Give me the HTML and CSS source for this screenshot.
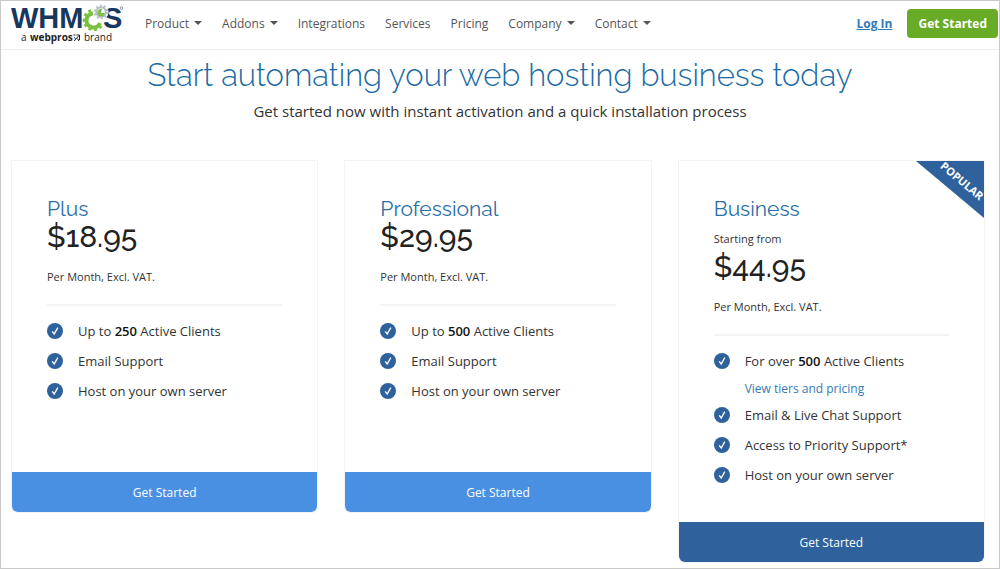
FILE: index.html
```
<!DOCTYPE html>
<html lang="en">
<head>
    <meta charset="UTF-8">
    <meta name="viewport" content="width=device-width, initial-scale=1.0">
    <title>WHMCS Pricing</title>
    <link rel="stylesheet" href="styles.css">
</head>
<body>
    <svg class="sprite" aria-hidden="true">
        <symbol id="check" viewBox="0 0 16 16">
            <circle cx="8" cy="8" r="8" fill="#2f629c"/>
            <path d="M5.200 8.400l2 2.600 3.600-6.400" fill="none" stroke="#fff" stroke-width="1.300"/>
        </symbol>
    </svg>

    <header class="navbar">
        <a class="logo" href="#" aria-label="WHMCS, a webpros brand">
            <svg width="116" height="42" viewBox="0 0 116 42">
                <g class="logo-name">
                    <text x="0" y="26">WHM</text>
                    <text x="92" y="26">S</text>
                </g>
                <!-- big gear, open on the right -->
                <path d="M89 21A7 7 0 1 1 82 11.500" fill="none" stroke="#7ac043" stroke-width="4"/>
                <path d="M90.500 24A9.800 9.800 0 1 1 82 8.200" fill="none" stroke="#7ac043" stroke-width="2.600" stroke-dasharray="3 2.600"/>
                <!-- small gear -->
                <circle cx="90" cy="10" r="7.600" fill="#fff"/>
                <circle cx="90" cy="10" r="4.800" fill="none" stroke="#b4bcc4" stroke-width="2"/>
                <circle cx="90" cy="10" r="6.400" fill="none" stroke="#b4bcc4" stroke-width="1.800" stroke-dasharray="2 2.020"/>
                <path d="M90 11l1-4A3.800 3.800 0 1 0 93.800 11z" fill="#7ac043"/>
                <circle cx="110.500" cy="6" r="1.300" fill="none" stroke="#8496a8" stroke-width="1"/>
                <g class="logo-brand">
                    <text x="10" y="39">a</text>
                    <text x="19" y="39" class="strong">webpros</text>
                    <text x="73" y="39">brand</text>
                </g>
                <path d="M62.500 33h2M65.500 33h3v5M68 33.500L63 39M63 35.500l1.500 1M66.500 36.500l1.500 2.500" fill="none" stroke="#222" stroke-width="1"/>
            </svg>
        </a>
        <nav class="menu">
            <a href="#">Product <span class="caret"></span></a>
            <a href="#">Addons <span class="caret"></span></a>
            <a href="#">Integrations</a>
            <a href="#">Services</a>
            <a href="#">Pricing</a>
            <a href="#">Company <span class="caret"></span></a>
            <a href="#">Contact <span class="caret"></span></a>
        </nav>
        <div class="actions">
            <a class="login" href="#">Log In</a>
            <button class="signup">Get Started</button>
        </div>
    </header>

    <main>
        <section class="intro">
            <h1>Start automating your web hosting business today</h1>
            <p>Get started now with instant activation and a quick installation process</p>
        </section>

        <section class="plans">
            <article class="plan">
                <div class="plan-body">
                    <h2>Plus</h2>
                    <div class="price">$18.95</div>
                    <p class="note">Per Month, Excl. VAT.</p>
                    <ul class="features">
                        <li><svg class="check"><use href="#check"/></svg><span>Up to <b>250</b> Active Clients</span></li>
                        <li><svg class="check"><use href="#check"/></svg><span>Email Support</span></li>
                        <li><svg class="check"><use href="#check"/></svg><span>Host on your own server</span></li>
                    </ul>
                </div>
                <button class="order">Get Started</button>
            </article>

            <article class="plan">
                <div class="plan-body">
                    <h2>Professional</h2>
                    <div class="price">$29.95</div>
                    <p class="note">Per Month, Excl. VAT.</p>
                    <ul class="features">
                        <li><svg class="check"><use href="#check"/></svg><span>Up to <b>500</b> Active Clients</span></li>
                        <li><svg class="check"><use href="#check"/></svg><span>Email Support</span></li>
                        <li><svg class="check"><use href="#check"/></svg><span>Host on your own server</span></li>
                    </ul>
                </div>
                <button class="order">Get Started</button>
            </article>

            <article class="plan popular">
                <div class="ribbon"><span>POPULAR</span></div>
                <div class="plan-body">
                    <h2>Business</h2>
                    <p class="from">Starting from</p>
                    <div class="price">$44.95</div>
                    <p class="note">Per Month, Excl. VAT.</p>
                    <ul class="features">
                        <li><svg class="check"><use href="#check"/></svg><span>For over <b>500</b> Active Clients</span></li>
                        <li class="tiers"><a href="#">View tiers and pricing</a></li>
                        <li><svg class="check"><use href="#check"/></svg><span>Email &amp; Live Chat Support</span></li>
                        <li><svg class="check"><use href="#check"/></svg><span>Access to Priority Support*</span></li>
                        <li><svg class="check"><use href="#check"/></svg><span>Host on your own server</span></li>
                    </ul>
                </div>
                <button class="order">Get Started</button>
            </article>
        </section>
    </main>
</body>
</html>
```
FILE: styles.css
```
* {
    box-sizing: border-box;
}
body {
    margin: 0;
    min-height: 100vh;
    border: 1px solid #c8c8c8;
    background: #fff;
    color: #333;
    font-family: "Open Sans", sans-serif;
    font-size: 13px;
}
h1, h2, p, ul {
    margin: 0;
    padding: 0;
    font-weight: 400;
}
button {
    border: 0;
    color: #fff;
    font-family: inherit;
    cursor: pointer;
}
.sprite {
    display: block;
    width: 0;
    height: 0;
}

/* Top bar */
.navbar {
    display: flex;
    align-items: center;
    height: 49px;
    padding: 0 1px 4px 10px;
    border-bottom: 1px solid #eee;
}
.logo {
    display: flex;
    margin-right: 18px;
}
.logo-name {
    fill: #17375e;
    font-family: "Liberation Sans", Arial, sans-serif;
    font-size: 29px;
    font-weight: 700;
}
.logo-brand {
    fill: #222;
    font-size: 10px;
}
.logo-brand .strong {
    font-weight: 700;
}
.menu {
    display: flex;
    gap: 20px;
    font-size: 12px;
}
.menu a {
    display: flex;
    align-items: center;
    gap: 5px;
    color: #555;
    text-decoration: none;
}
.caret {
    border-top: 4px solid #555;
    border-left: 4px solid transparent;
    border-right: 4px solid transparent;
}
.actions {
    display: flex;
    align-items: center;
    gap: 15px;
    margin-left: auto;
}
.login {
    color: #337ab7;
    font-size: 12px;
    font-weight: 700;
}
.signup {
    height: 29px;
    padding: 0 11px;
    border-radius: 4px;
    background: #67ab27;
    font-size: 12px;
    font-weight: 700;
}

/* Heading */
.intro {
    padding-top: 4px;
    text-align: center;
}
h1 {
    color: #1a6aa5;
    font-family: Raleway, Lato, sans-serif;
    font-size: 31px;
    font-weight: 300;
    line-height: 42px;
}
.intro p {
    font-size: 15px;
    line-height: 30px;
}

/* Pricing cards */
.plans {
    display: grid;
    grid-template-columns: repeat(3, 1fr);
    align-items: start;
    gap: 26px;
    padding: 34px 14px 0 10px;
}
.plan {
    position: relative;
    border: 1px solid #f3f3f3;
    border-radius: 0 0 6px 6px;
}
.plan-body {
    padding: 36px 35px 32px;
}
h2 {
    color: #2a70a8;
    font-family: Raleway, Lato, sans-serif;
    font-size: 21px;
    line-height: 24px;
}
.price {
    color: #222;
    font-family: Raleway, Lato, sans-serif;
    font-size: 30px;
    font-weight: 500;
    line-height: 32px;
}
.from {
    padding-top: 6px;
    font-size: 11px;
    line-height: 24px;
}
.note {
    padding: 12px 0 15px;
    border-bottom: 2px solid #f3f3f3;
    font-size: 11px;
    line-height: 24px;
}
.features {
    min-height: 134px;
    padding-top: 10px;
    list-style: none;
}
.features li {
    display: flex;
    align-items: center;
    gap: 15px;
    height: 30px;
}
.features b {
    color: #111;
    font-weight: 600;
}
.features .tiers {
    height: 24px;
    padding-left: 31px;
}
.tiers a {
    color: #337ab7;
    font-size: 12px;
    text-decoration: none;
}
.check {
    width: 16px;
    height: 16px;
}
.order {
    display: block;
    width: 100%;
    height: 40px;
    border-radius: 0 0 6px 6px;
    background: #4990e2;
    font-size: 12px;
    font-weight: 500;
}
.popular .order {
    background: #2f629c;
}
.ribbon {
    position: absolute;
    top: 0;
    right: 0;
    width: 68px;
    height: 57px;
    background: #2f629c;
    clip-path: polygon(0 0, 100% 0, 100% 100%);
}
.ribbon span {
    position: absolute;
    top: 12px;
    left: 20px;
    color: #fff;
    font-size: 11px;
    font-weight: 700;
    line-height: 16px;
    transform: rotate(40deg);
}
```
